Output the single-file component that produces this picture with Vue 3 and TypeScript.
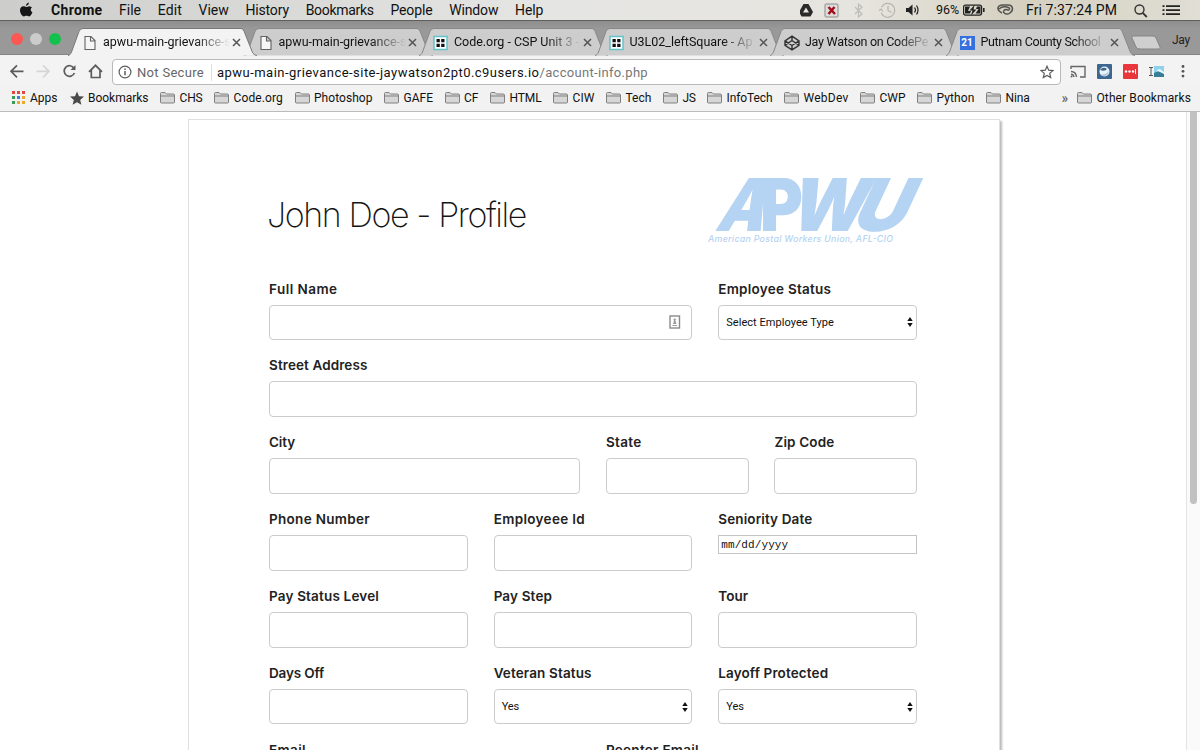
<script setup lang="ts">
// Sets letter-spacing so that a run of text takes up exactly the given width.
const vFit = {
  mounted(el: HTMLElement, binding: { value: number }) {
    const natural = el.getBoundingClientRect().width
    const count = (el.textContent ?? '').length
    if (count > 0) el.style.letterSpacing = `${(binding.value - natural) / count}px`
  },
}

interface Run { text: string; w: number }
interface Field { label: string; w: number; span: number; kind?: 'select' | 'date'; value?: string; vw?: number; badge?: boolean }

const menus: Run[] = [
  { text: 'File', w: 22 }, { text: 'Edit', w: 24 }, { text: 'View', w: 30 },
  { text: 'History', w: 43.5 }, { text: 'Bookmarks', w: 68 }, { text: 'People', w: 42 },
  { text: 'Window', w: 49 }, { text: 'Help', w: 28 },
]

const tabs: (Run & { icon: string })[] = [
  { text: 'apwu-main-grievance-s', w: 128, icon: 'page' },
  { text: 'apwu-main-grievance-s', w: 128, icon: 'page' },
  { text: 'Code.org - CSP Unit 3 -', w: 125, icon: 'code' },
  { text: 'U3L02_leftSquare - Ap', w: 123, icon: 'code' },
  { text: 'Jay Watson on CodePe', w: 123, icon: 'pen' },
  { text: 'Putnam County School', w: 120, icon: 'cal' },
]

const folders: Run[] = [
  { text: 'CHS', w: 23 }, { text: 'Code.org', w: 49.5 }, { text: 'Photoshop', w: 58.5 },
  { text: 'GAFE', w: 29.5 }, { text: 'CF', w: 14.5 }, { text: 'HTML', w: 32 },
  { text: 'CIW', w: 22 }, { text: 'Tech', w: 26 }, { text: 'JS', w: 13 },
  { text: 'InfoTech', w: 46 }, { text: 'WebDev', w: 45 }, { text: 'CWP', w: 26 },
  { text: 'Python', w: 38 }, { text: 'Nina', w: 24 },
]

const fields: Field[] = [
  { label: 'Full Name', w: 68.5, span: 8, badge: true },
  { label: 'Employee Status', w: 113, span: 4, kind: 'select', value: 'Select Employee Type', vw: 107.5 },
  { label: 'Street Address', w: 98.5, span: 12 },
  { label: 'City', w: 26, span: 6 },
  { label: 'State', w: 35.5, span: 3 },
  { label: 'Zip Code', w: 60, span: 3 },
  { label: 'Phone Number', w: 101, span: 4 },
  { label: 'Employeee Id', w: 91.5, span: 4 },
  { label: 'Seniority Date', w: 94, span: 4, kind: 'date' },
  { label: 'Pay Status Level', w: 110, span: 4 },
  { label: 'Pay Step', w: 58.5, span: 4 },
  { label: 'Tour', w: 30, span: 4 },
  { label: 'Days Off', w: 55, span: 4 },
  { label: 'Veteran Status', w: 98, span: 4, kind: 'select', value: 'Yes', vw: 17.5 },
  { label: 'Layoff Protected', w: 110, span: 4, kind: 'select', value: 'Yes', vw: 17.5 },
  { label: 'Email', w: 37, span: 6 },
  { label: 'Reenter Email', w: 93, span: 6 },
]

const appColors = ['#e0483e', '#e0483e', '#e0483e', '#3b9a55', '#3f7de0', '#e9a92c', '#3b9a55', '#e9a92c', '#e9a92c']
</script>

<template>
  <div class="screen">
    <header class="menubar">
      <svg class="apple" width="14" height="16" viewBox="0 0 14 16"><path fill="#161616" d="M9.9.4C10 1.900 8.600 3.700 7 3.700 6.800 2.200 8.300.6 9.900.4ZM12.900 5.600C11.200 6.700 11.300 9.400 13.400 10.300 12.700 12.300 11.500 14.400 10.100 14.400 9.100 14.400 8.700 13.800 7.500 13.800 6.300 13.800 5.800 14.400 4.900 14.400 3.200 14.400 1 11.400 1 8.300 1 5.700 2.700 4.300 4.400 4.300 5.600 4.300 6.500 5 7.300 5 8 5 9 4.200 10.400 4.200 11.400 4.300 12.300 4.700 12.900 5.600Z"/></svg>
      <b class="app-name"><span v-fit="51.5">Chrome</span></b>
      <nav class="menus"><span v-for="m in menus" :key="m.text" v-fit="m.w">{{ m.text }}</span></nav>
      <div class="status">
        <svg width="398" height="20" viewBox="0 0 398 20">
          <path fill="#2a2a28" d="M3.500 4h5l4.500 8-2.500 4.500h-9L-1 12zM6 7.500 3 12.500h6z" fill-rule="evenodd"/>
          <rect x="25" y="4" width="13" height="13" rx="1" fill="#ddd" stroke="#8c8c88"/>
          <path d="m28.500 7 6.500 7M34.500 7l-6 7" stroke="#a20d18" stroke-width="2.500"/>
          <path d="m55 7 7 7-3.500 3V4l3.500 3-7 7" fill="none" stroke="#bdbcb6" stroke-width="1.200"/>
          <g fill="none" stroke="#b5b4ae" stroke-width="1.200"><path d="M81.500 7.200a7 7 0 1 1-.3 5.500M79 10.500l2.200-1.500 1.500 2.500M88 6v4.500l3.500 2"/></g>
          <path fill="#222" d="M106 8h2.500l4-3.500v11l-4-3.500H106z"/><path d="M114.500 7.500q2 2.500 0 5M116.500 5.500q3 4.500 0 9" fill="none" stroke="#222" stroke-width="1.200"/>
          <g transform="translate(2 0)"><rect x="161.600" y="5.100" width="18" height="10" rx="2" fill="none" stroke="#222" stroke-width="1.200"/><path d="M163 6.500h5l-2 4.500h3l-1 2.500h-5zM178.500 6.500H175l-1 2.500h2.500l-3 4.500h5z" fill="#222"/><path d="m172.500 5-5 5.500h3l-1.500 5 5.500-6h-3z" fill="#222"/><path d="M181.800 8v4" stroke="#222" stroke-width="1.600"/></g>
          <g fill="none" stroke="#555550" stroke-width="1.500"><path d="M202 13c-6-3-5-8 1-8h5c5 0 6 5 2 8-3 2.500-8 0-6-2.500 1-1.500 5-1.500 4 .5M199 9q3-3 8-2 4 1 2 3"/></g>
          <circle cx="339.500" cy="9.500" r="4.500" fill="none" stroke="#333" stroke-width="1.400"/><path d="m342.700 12.800 4.100 4.200" stroke="#333" stroke-width="1.800"/>
          <path d="M366 6.200h14M366 10.200h14M366 14.200h14" stroke="#222" stroke-width="1.700"/><path d="M362.500 6.200h2M362.500 10.200h2M362.500 14.200h2" stroke="#222" stroke-width="1.700"/>
        </svg>
        <span class="percent"><span v-fit="23">96%</span></span>
        <span class="clock"><span v-fit="91">Fri 7:37:24 PM</span></span>
      </div>
    </header>

    <div class="tabstrip">
      <div class="lights"><i class="red" /><i class="grey" /><i class="green" /></div>
      <div class="tabs">
        <div v-for="(t, i) in tabs" :key="i" class="tab" :class="{ active: i === 0 }">
          <svg class="shape" width="190" height="28" viewBox="0 0 190 28"><path d="M0 27.500C2 27 2.500 26 3.500 24L11 3.500Q12 .5 15 .5H173Q175 .5 176 3L184.500 24.500Q186 27.500 189 27.500"/></svg>
          <svg v-if="t.icon === 'page'" class="fav" width="16" height="16" viewBox="0 0 16 16"><path d="M3 1.500h6l4 4v9H3zM8.500 1.500V6H13" fill="#f6f6f6" stroke="#626262" stroke-width="1.100"/></svg>
          <svg v-else-if="t.icon === 'code'" class="fav" width="16" height="16" viewBox="0 0 16 16"><rect x="1" y="1.500" width="13" height="13" fill="#fff" stroke="#62c3c9" stroke-width="1.500"/><path d="M3.500 4h3.300v3.300H3.500zM8.200 4h3.300v3.300H8.200zM3.500 8.700h3.300V12H3.500zM8.200 8.700h3.300V12H8.200z" fill="#111"/></svg>
          <svg v-else-if="t.icon === 'pen'" class="fav" width="16" height="16" viewBox="0 0 16 16"><path d="M8 1.200 15 5.800v4.500l-7 4.600-7-4.600V5.800zM8 1.200v4.300M8 10.500v4.400M1 5.800l7 4.700 7-4.700M1 10.300l7-4.800 7 4.800" fill="none" stroke="#333" stroke-width="1.400"/></svg>
          <span v-else class="fav cal">21</span>
          <span class="caption"><span v-fit="t.w">{{ t.text }}</span></span>
          <svg class="close" width="9" height="9" viewBox="0 0 9 9"><path d="m1 1 7 7M8 1 1 8" stroke="#555" stroke-width="1.500"/></svg>
        </div>
      </div>
      <svg class="newtab" width="32" height="16" viewBox="0 0 32 16"><path d="M2 1h20q2 0 3 2l4 9q1 2-1 2H9q-3 0-4-2L1 3Q0 1 2 1Z" fill="#cfcfcf" stroke="#858585"/></svg>
      <span class="user"><span v-fit="18">Jay</span></span>
    </div>

    <div class="toolbar">
      <svg class="nav" width="112" height="30" viewBox="0 56 112 30" fill="none" stroke="#5c5c5c" stroke-width="1.700">
        <path d="M23.500 72.300H11.500M17 66.300l-6 6 6 6"/>
        <path d="M36.500 72.300h12M43 66.300l6 6-6 6" stroke="#d5d5d5"/>
        <path d="M74 69.200a5.300 5.300 0 1 0 .4 4.800"/><path d="M75.500 66v5h-5z" fill="#5c5c5c" stroke="none"/>
        <path d="m89 72.800 6.500-6.500 6.500 6.500M91.300 71v7.500h8.700V71"/>
      </svg>
      <div class="omnibox">
        <svg width="14" height="14" viewBox="0 0 14 14"><circle cx="7" cy="7" r="5.900" fill="none" stroke="#5d5d5d" stroke-width="1.200"/><path d="M7 6v4.300M7 3.500v1.600" stroke="#5d5d5d" stroke-width="1.500"/></svg>
        <span class="secure"><span v-fit="67">Not Secure</span></span>
        <span class="url"><span v-fit="322.5">apwu-main-grievance-site-jaywatson2pt0.c9users.io</span><span v-fit="108.5" class="path">/account-info.php</span></span>
        <svg class="star" width="14" height="14" viewBox="0 0 14 14"><path d="m7 1.200 1.700 4 4.200.4-3.200 2.800 1 4.200L7 10.400l-3.700 2.200 1-4.200-3.200-2.800 4.200-.4z" fill="none" stroke="#5c5c5c" stroke-width="1.200"/></svg>
      </div>
      <svg class="extensions" width="139" height="30" viewBox="1061 56 139 30">
        <g fill="none" stroke="#666" stroke-width="1.400"><path d="M1071 70v-2.500h14v10.500h-5M1071 72.500q5 0 5.500 5.500M1071 75.200q2.500 0 3 2.800"/></g><circle cx="1071.500" cy="77.500" r="1" fill="#666"/>
        <rect x="1097" y="65" width="15" height="15" rx="1" fill="#3c6590"/><circle cx="1104.500" cy="72.500" r="5" fill="#e9f1f8"/><path d="M1100 71q3-4 7-1-2 3-7 1Z" fill="#3c6590"/><path d="M1100 75q5 2 9-3-1 5-5 5-3 0-4-2" fill="#a7c2dc"/>
        <rect x="1123" y="65" width="15" height="15" rx="1" fill="#e9363c"/><g fill="#fff"><circle cx="1126" cy="72.500" r="1.200"/><circle cx="1129.500" cy="72.500" r="1.200"/><circle cx="1133" cy="72.500" r="1.200"/><path d="M1135 70h1v5h-1z"/></g>
        <rect x="1154" y="67" width="10" height="11" fill="#8fd0ec"/><path d="M1154 74q4-3 10 0v4h-10z" fill="#347f95"/><path d="m1156 71 4-1 4 3v2z" fill="#e4f6fb"/><path d="M1149 68.500h4M1151 68v9M1149 76.500h4" stroke="#555"/>
        <g fill="#555"><circle cx="1183" cy="67.500" r="1.400"/><circle cx="1183" cy="72.300" r="1.400"/><circle cx="1183" cy="77.100" r="1.400"/></g>
      </svg>
    </div>

    <div class="bookmarks">
      <span class="apps"><i v-for="(c, i) in appColors" :key="i" :style="{ background: c }" /></span>
      <span class="apps-text"><span v-fit="27.500">Apps</span></span>
      <svg class="bstar" width="14" height="14" viewBox="0 0 14 14"><path d="m7 .5 2 4.700 5 .4-3.800 3.300 1.200 4.900L7 11.200l-4.400 2.600 1.200-4.900L0 5.600l5-.4z" fill="#4b4b4b"/></svg>
      <span class="b-text"><span v-fit="60.500">Bookmarks</span></span>
      <span v-for="f in folders" :key="f.text" class="folder">
        <svg width="15" height="13" viewBox="0 0 15 13"><path d="M.5 11v-8.500q0-1 1-1H5L6.500 3H13q1.500 0 1.500 1v7q0 1-1 1h-12q-1 0-1-1ZM.5 5h14" fill="#d6d6d6" stroke="#808080"/></svg>
        <span v-fit="f.w">{{ f.text }}</span>
      </span>
      <span class="more">»</span>
      <span class="folder other">
        <svg width="15" height="13" viewBox="0 0 15 13"><path d="M.5 11v-8.500q0-1 1-1H5L6.500 3H13q1.500 0 1.500 1v7q0 1-1 1h-12q-1 0-1-1ZM.5 5h14" fill="#d6d6d6" stroke="#808080"/></svg>
        <span v-fit="94.500">Other Bookmarks</span>
      </span>
    </div>

    <main class="page">
      <section class="card">
        <div class="heading">
          <h1><span v-fit="259">John Doe - Profile</span></h1>
          <svg class="logo" width="224" height="74" viewBox="0 0 224 74" fill="#b5d3f2">
            <g class="logo-big">
              <text transform="translate(10 60) skewX(-20)" textLength="48" lengthAdjust="spacingAndGlyphs">A</text>
              <text transform="translate(56 60)" textLength="43" lengthAdjust="spacingAndGlyphs">P</text>
              <text transform="translate(82 60) skewX(-16)" textLength="77" lengthAdjust="spacingAndGlyphs">W</text>
              <text transform="translate(144 60) skewX(-25)" textLength="54" lengthAdjust="spacingAndGlyphs">U</text>
            </g>
            <text class="logo-small" x="4" y="70.500" textLength="185">American Postal Workers Union, AFL-CIO</text>
          </svg>
        </div>
        <form class="grid" @submit.prevent>
          <div v-for="f in fields" :key="f.label" class="field" :class="'span' + f.span">
            <label><span v-fit="f.w">{{ f.label }}</span></label>
            <div v-if="f.kind === 'date'" class="date"><span v-fit="67">mm/dd/yyyy</span></div>
            <div v-else class="control">
              <template v-if="f.kind === 'select'">
                <span v-fit="f.vw" class="value">{{ f.value }}</span>
                <svg class="arrows" width="6" height="10" viewBox="0 0 6 10"><path d="m3 0 2.700 4H.3zM3 10 .3 6h5.400z" fill="#111"/></svg>
              </template>
              <svg v-if="f.badge" class="badge" width="12" height="14" viewBox="0 0 12 14"><rect x="1" y="1" width="9.500" height="12" fill="#fff" stroke="#8b8b8b" stroke-width="1.400"/><circle cx="5.700" cy="4.800" r="1.200" fill="#999"/><path d="M5 6h1.500l1 3H4zM3.500 10h4.500v1H3.500z" fill="#999"/></svg>
            </div>
          </div>
        </form>
      </section>
      <div class="scrollbar"><div class="thumb" /></div>
    </main>
  </div>
</template>

<style>
body { background: #fff; overflow: hidden; }
</style>

<style scoped>
* { box-sizing: border-box; }
.screen { width: 1200px; height: 750px; overflow: hidden; display: flex; flex-direction: column; font-family: Roboto, "Liberation Sans", sans-serif; color: #111; white-space: nowrap; }
span { white-space: pre; }
.menubar { flex: none; height: 21px; display: flex; align-items: center; background: linear-gradient(90deg, #cdcecb 0, #e5e5e3 45%, #e6e4de 72%, #d5d0c0 85%, #e0ded5 100%); border-bottom: 1px solid #5f5f5c; font-size: 14px; line-height: 20px; }
.apple { margin: 0 0 0 19px; }
.app-name { margin-left: 18px; width: 51px; }
.menus { display: flex; gap: 16.8px; margin-left: 17px; }
.status { margin-left: auto; width: 400px; height: 20px; position: relative; }
.percent { position: absolute; left: 136px; top: 0; font-size: 12.500px; }
.clock { position: absolute; left: 226px; top: 0; }
.tabstrip { flex: none; height: 34px; background: linear-gradient(#8e8e8e, #999 8px); display: flex; position: relative; border-bottom: 1px solid #858585; }
.lights { width: 68px; padding: 12px 0 0 11px; display: flex; gap: 7px; flex: none; }
.lights i { width: 12px; height: 12px; border-radius: 50%; flex: none; }
.red { background: #fc5753; }
.grey { background: #cbcbcb; }
.green { background: #13c14e; }
.tabs { display: flex; padding-top: 7px; }
.tab { width: 175.5px; height: 28px; position: relative; display: flex; align-items: center; padding-left: 14px; flex: none; }
.tab:nth-child(n+2) { z-index: 0; }
.tab.active { z-index: 2; }
.shape { position: absolute; left: 0; top: 0; fill: #cdcdcd; stroke: #888; }
.active .shape { fill: #f3f3f3; stroke: #777; }
.fav { position: relative; flex: none; margin-right: 5px; margin-top: 1px; }
.cal { width: 15px; height: 14px; background: #3470e0; color: #fff; font-size: 10px; font-weight: 700; text-align: center; line-height: 14px; margin-right: 6px; }
.caption { position: relative; width: 127px; font-size: 12.500px; line-height: 16px; overflow: hidden; -webkit-mask-image: linear-gradient(90deg, #000 92px, transparent 127px); mask-image: linear-gradient(90deg, #000 92px, transparent 127px); }
.close { position: relative; margin-left: 2px; flex: none; }
.newtab { margin: 14px 0 0 10px; flex: none; }
.user { position: absolute; right: 10px; top: 11px; font-size: 12px; line-height: 16px; color: #222; }
.toolbar { flex: none; height: 30px; background: #f3f3f3; display: flex; align-items: flex-start; }
.nav { flex: none; }
.omnibox { width: 949px; height: 26px; margin-top: 4px; border: 1px solid #b9b9b9; border-radius: 4px; background: #fff; display: flex; align-items: center; padding: 0 6px 0 5px; }
.secure { width: 75px; margin-left: 5px; font-size: 13px; color: #666; border-right: 1px solid #ddd; height: 17px; line-height: 17px; }
.url { font-size: 13px; margin-left: 5px; }
.path { color: #777; }
.star { margin-left: auto; }
.bookmarks { flex: none; height: 27px; background: #f2f2f2; border-bottom: 1px solid #bbb; display: flex; align-items: center; font-size: 12px; line-height: 14px; padding: 0 9px 1px 12px; }
.apps { display: grid; grid-template-columns: repeat(3, 3px); gap: 2px; width: 13px; margin-right: 5px; }
.apps i { height: 3px; }
.bstar { margin: 0 4px 0 12.500px; }
.folder { display: flex; align-items: center; gap: 4.500px; margin-left: 11.500px; }
.more { margin-left: auto; color: #555; font-size: 14px; }
.other { margin-left: 9px; }
.page { flex: 1; min-height: 0; display: flex; position: relative; background: #fff; }
.card { width: 812px; height: 700px; margin: 7px 0 0 188px; border: 1px solid #e0e0e0; box-shadow: 2px 2px 2px #bbb; padding: 50.6px 82px 0 80px; flex: none; background: #fff; }
.heading { display: flex; justify-content: space-between; height: 106px; }
h1 { margin: 18px 0 0 -2px; font: 200 34px/52px Inter, sans-serif; color: #151515; }
.logo { margin-right: -11px; flex: none; }
.logo-big { font: 900 73px Inter, sans-serif; }
.logo-small { font: italic 500 8.800px Inter, sans-serif; }
.grid { display: grid; grid-template-columns: repeat(12, minmax(0, 1fr)); column-gap: 25.920px; grid-auto-rows: 76.870px; }
.span3 { grid-column: span 3; }
.span4 { grid-column: span 4; }
.span6 { grid-column: span 6; }
.span8 { grid-column: span 8; }
.span12 { grid-column: span 12; }
label { display: block; height: 28px; font: 600 13.500px/24.5px Inter, sans-serif; color: #222; }
.control { height: 35.5px; border: 1px solid #cbcbcb; border-radius: 4px; display: flex; align-items: center; padding: 0 3px 0 7px; }
.value { font-size: 11px; }
.arrows { margin-left: auto; }
.badge { margin: 0 7px 0 auto; }
.date { height: 19px; border: 1px solid #c4c4c4; padding-left: 2px; font: 11px/19px "Liberation Mono", monospace; color: #111; }
.scrollbar { position: absolute; right: 0; top: 0; bottom: 0; width: 14px; background: #fafafa; border-left: 1px solid #e3e3e3; }
.thumb { width: 7px; height: 392px; margin-left: 3px; background: #c1c1c1; border-radius: 0 0 4px 4px; }
</style>
